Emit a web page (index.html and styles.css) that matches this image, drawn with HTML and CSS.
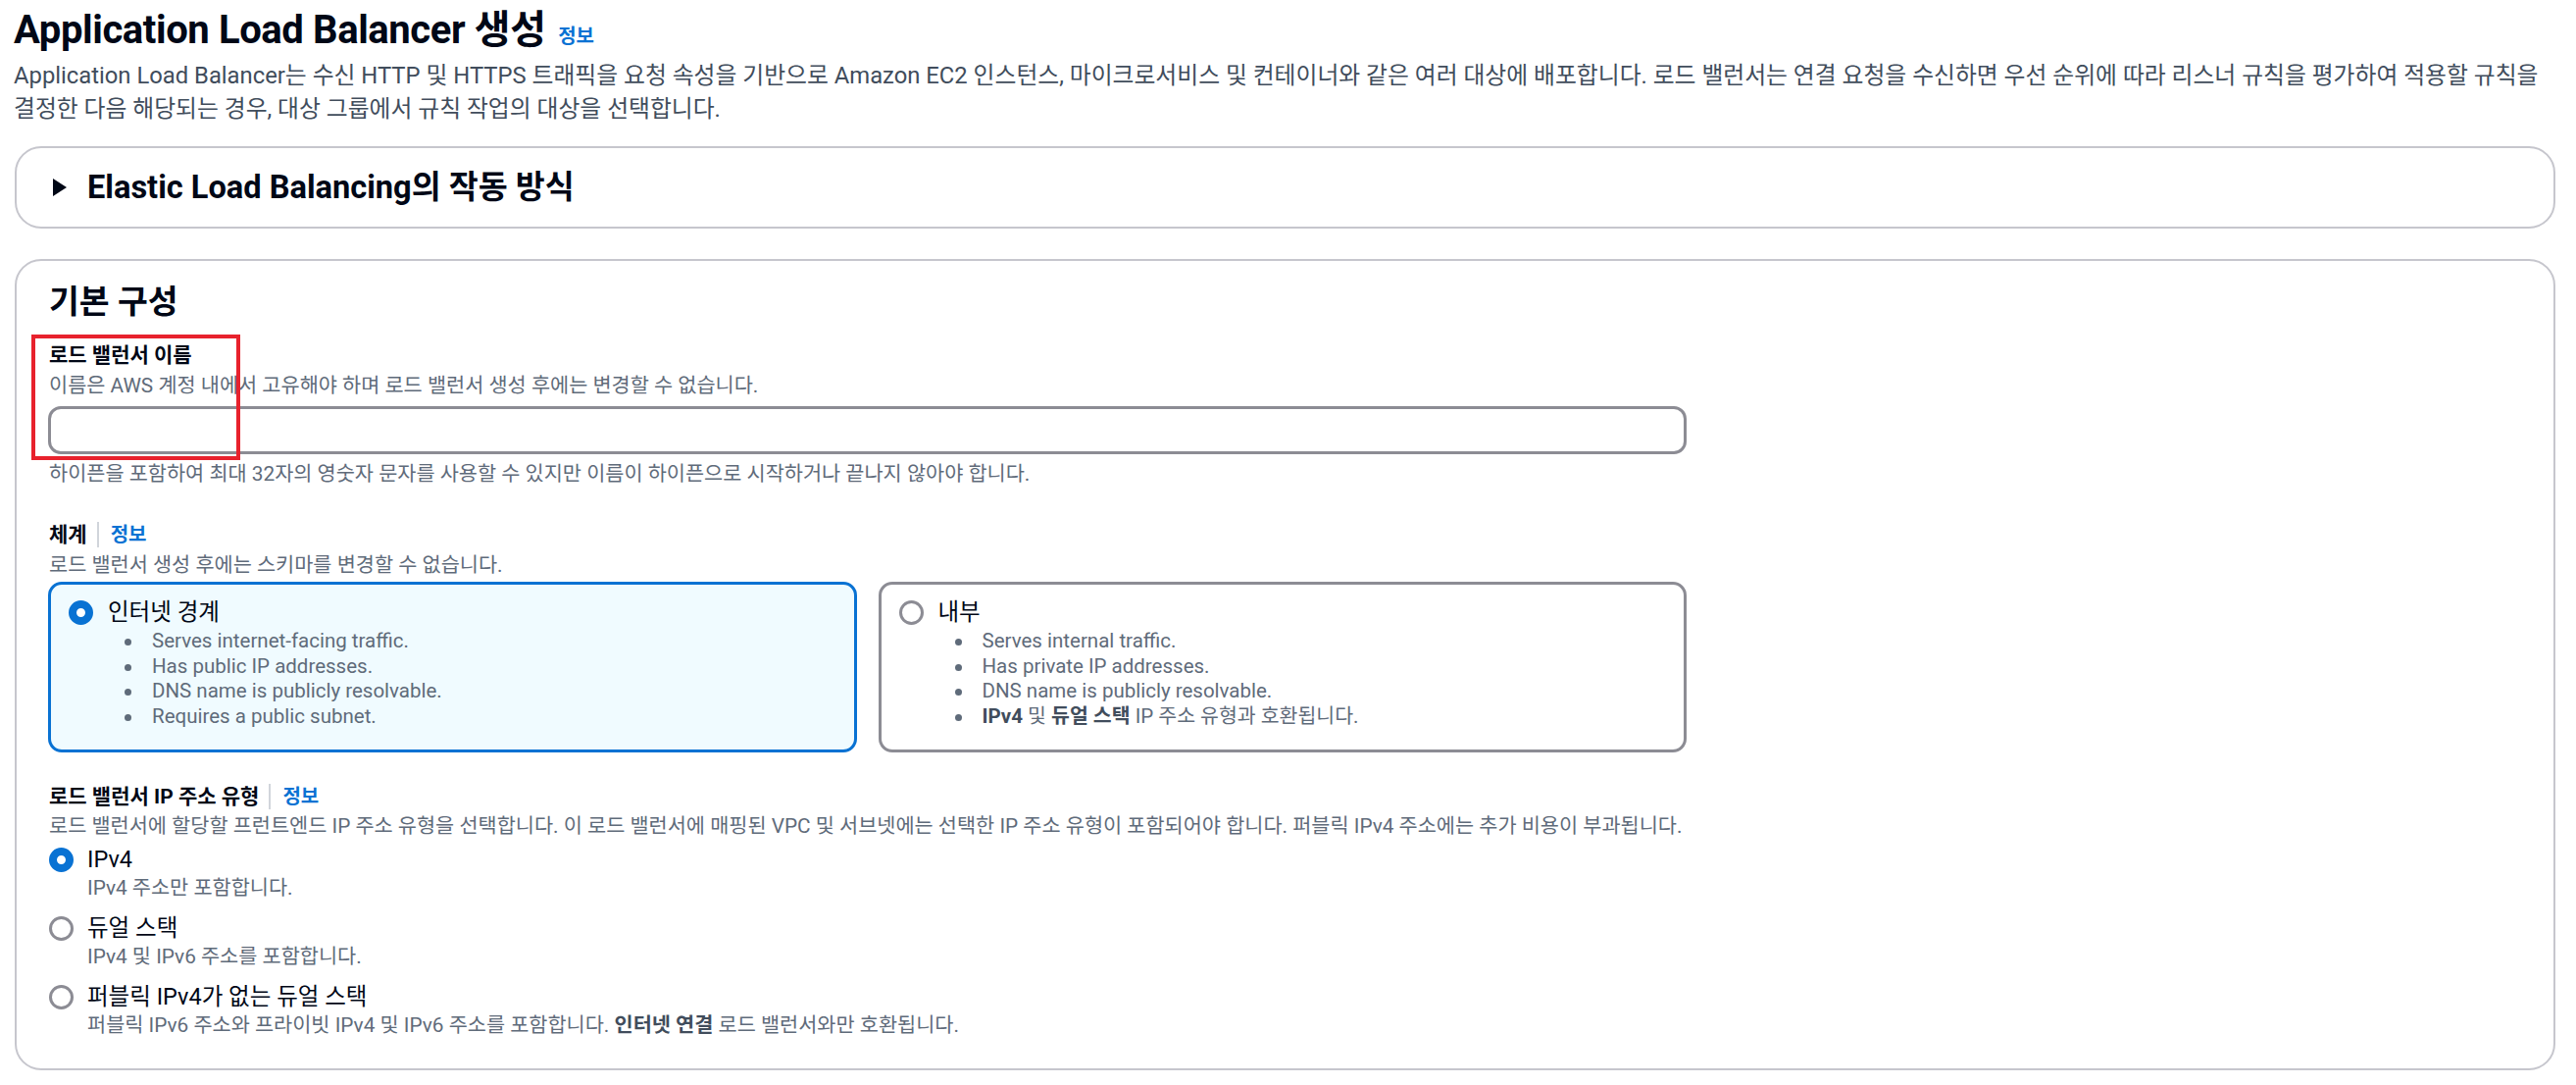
FILE: index.html
```html
<!DOCTYPE html>
<html lang="ko">
<head>
<meta charset="utf-8">
<title>Application Load Balancer 생성</title>
<link rel="stylesheet" href="styles.css">
</head>
<body>
<div class="page">
  <header class="page-head">
    <h1 class="page-title">Application Load Balancer 생성 <a class="info-link title-info">정보</a></h1>
    <p class="lead">Application Load Balancer는 수신 HTTP 및 HTTPS 트래픽을 요청 속성을 기반으로 Amazon EC2 인스턴스, 마이크로서비스 및 컨테이너와 같은 여러 대상에 배포합니다. 로드 밸런서는 연결 요청을 수신하면 우선 순위에 따라 리스너 규칙을 평가하여 적용할 규칙을 결정한 다음 해당되는 경우, 대상 그룹에서 규칙 작업의 대상을 선택합니다.</p>
  </header>

  <section class="card expander">
    <span class="caret"></span>
    <h2 class="expander-title">Elastic Load Balancing의 작동 방식</h2>
  </section>

  <section class="card config">
    <h2 class="card-title">기본 구성</h2>

    <div class="field">
      <div class="label">로드 밸런서 이름</div>
      <div class="desc">이름은 AWS 계정 내에서 고유해야 하며 로드 밸런서 생성 후에는 변경할 수 없습니다.</div>
      <div class="text-input"></div>
      <div class="desc constraint">하이픈을 포함하여 최대 32자의 영숫자 문자를 사용할 수 있지만 이름이 하이픈으로 시작하거나 끝나지 않아야 합니다.</div>
    </div>

    <div class="field scheme">
      <div class="label">체계<span class="divider"></span><a class="info-link">정보</a></div>
      <div class="desc">로드 밸런서 생성 후에는 스키마를 변경할 수 없습니다.</div>
      <div class="tiles">
        <div class="tile selected">
          <div class="tile-head"><span class="radio checked"></span><span class="tile-label">인터넷 경계</span></div>
          <ul class="bullets">
            <li>Serves internet-facing traffic.</li>
            <li>Has public IP addresses.</li>
            <li>DNS name is publicly resolvable.</li>
            <li>Requires a public subnet.</li>
          </ul>
        </div>
        <div class="tile">
          <div class="tile-head"><span class="radio"></span><span class="tile-label">내부</span></div>
          <ul class="bullets">
            <li>Serves internal traffic.</li>
            <li>Has private IP addresses.</li>
            <li>DNS name is publicly resolvable.</li>
            <li><b>IPv4</b> 및 <b>듀얼 스택</b> IP 주소 유형과 호환됩니다.</li>
          </ul>
        </div>
      </div>
    </div>

    <div class="field iptype">
      <div class="label">로드 밸런서 IP 주소 유형<span class="divider"></span><a class="info-link">정보</a></div>
      <div class="desc">로드 밸런서에 할당할 프런트엔드 IP 주소 유형을 선택합니다. 이 로드 밸런서에 매핑된 VPC 및 서브넷에는 선택한 IP 주소 유형이 포함되어야 합니다. 퍼블릭 IPv4 주소에는 추가 비용이 부과됩니다.</div>
      <div class="radio-group">
        <div class="option">
          <div class="option-head"><span class="radio checked"></span><span class="option-label">IPv4</span></div>
          <div class="desc option-desc">IPv4 주소만 포함합니다.</div>
        </div>
        <div class="option">
          <div class="option-head"><span class="radio"></span><span class="option-label">듀얼 스택</span></div>
          <div class="desc option-desc">IPv4 및 IPv6 주소를 포함합니다.</div>
        </div>
        <div class="option">
          <div class="option-head"><span class="radio"></span><span class="option-label">퍼블릭 IPv4가 없는 듀얼 스택</span></div>
          <div class="desc option-desc">퍼블릭 IPv6 주소와 프라이빗 IPv4 및 IPv6 주소를 포함합니다. <b>인터넷 연결</b> 로드 밸런서와만 호환됩니다.</div>
        </div>
      </div>
    </div>

    <div class="highlight-box"></div>
  </section>
</div>
</body>
</html>
```

FILE: styles.css
```css
* { box-sizing: border-box; }

html, body {
  margin: 0;
  padding: 0;
  background: #ffffff;
}

body {
  font-family: "Roboto", "Noto Sans CJK KR", sans-serif;
  color: #000716;
  width: 2627px;
}

.page {
  padding: 6px 21px 14px 14px;
}

.page-title {
  margin: 0;
  font-size: 40px;
  line-height: 50px;
  font-weight: 700;
  letter-spacing: -0.4px;
  color: #000716;
}

.info-link {
  color: #0972d3;
  font-weight: 700;
  font-size: 20px;
  letter-spacing: 0;
  text-decoration: none;
}

.title-info {
  margin-left: 3px;
}

.lead {
  margin: -1px 0 0 0;
  font-size: 23.8px;
  line-height: 33.5px;
  color: #414d5c;
}

.card {
  border: 2px solid #c6c6cd;
  border-radius: 27px;
  background: #ffffff;
  margin-left: 1px;
}

.expander {
  margin-top: 21px;
  height: 84px;
  display: flex;
  align-items: center;
  padding-left: 37px;
  gap: 21px;
}

.caret {
  width: 0;
  height: 0;
  border-left: 14px solid #000716;
  border-top: 9px solid transparent;
  border-bottom: 9px solid transparent;
}

.expander-title {
  margin: 0;
  font-size: 32.6px;
  line-height: 40px;
  font-weight: 700;
}

.config {
  position: relative;
  margin-top: 31px;
  padding: 20px 30px 30px 31px;
}

.card-title {
  margin: 0 0 0 2px;
  font-size: 33.5px;
  line-height: 44px;
  font-weight: 700;
}

.field {
  padding-left: 2px;
}

.label {
  margin-top: 15px;
  font-size: 21px;
  line-height: 34px;
  font-weight: 700;
  display: flex;
  align-items: center;
}

.desc {
  font-size: 20.8px;
  line-height: 28px;
  color: #5f6b7a;
}

.desc b {
  color: #414d5c;
}

.text-input {
  margin: 7px 0 0 -1px;
  width: 1671px;
  height: 49px;
  border: 3px solid #8c8c94;
  border-radius: 13px;
  background: #ffffff;
}

.constraint {
  margin-top: 6px;
}

.divider {
  display: inline-block;
  width: 2px;
  height: 26px;
  background: #d1d5db;
  margin: 0 12px 0 10px;
}

.label .info-link {
  font-size: 20px;
}

.scheme .label {
  margin-top: 31px;
}

.tiles {
  margin: 3px 0 0 -1px;
  width: 1671px;
  display: grid;
  grid-template-columns: 1fr 1fr;
  gap: 22px;
}

.tile {
  height: 174px;
  border: 3px solid #8c8c94;
  border-radius: 14px;
  padding: 11px 18px 0 18px;
  background: #ffffff;
}

.tile.selected {
  border-color: #0972d3;
  background: #f0fbff;
}

.tile-head {
  display: flex;
  align-items: center;
  height: 34px;
  gap: 15px;
}

.radio {
  flex: none;
  width: 25px;
  height: 25px;
  border-radius: 50%;
  border: 3px solid #8c8c94;
  background: #ffffff;
}

.radio.checked {
  border: 8px solid #0972d3;
}

.tile-label,
.option-label {
  font-size: 23.5px;
  line-height: 34px;
  color: #000716;
}

.bullets {
  margin: 0;
  padding-left: 85px;
  list-style: none;
  font-size: 20.5px;
  line-height: 25.5px;
  color: #5f6b7a;
}

.bullets li::before {
  content: "";
  display: inline-block;
  width: 7px;
  height: 7px;
  border-radius: 50%;
  background: #5f6b7a;
  margin-left: -28px;
  margin-right: 21px;
  vertical-align: middle;
}

.bullets b {
  color: #414d5c;
}

.iptype .label {
  margin-top: 29px;
  line-height: 32px;
}

.radio-group {
  margin-top: 5px;
  display: flex;
  flex-direction: column;
  gap: 12px;
}

.option-head {
  display: flex;
  align-items: center;
  height: 30px;
  gap: 14px;
}

.option-desc {
  padding-left: 39px;
}

.highlight-box {
  position: absolute;
  left: 15px;
  top: 75px;
  width: 213px;
  height: 128px;
  border: 4px solid #e8222d;
}
```
